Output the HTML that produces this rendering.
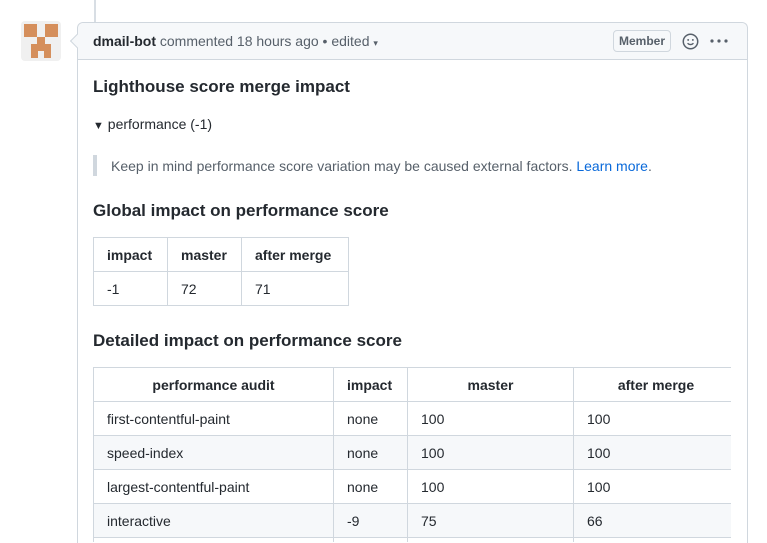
<!DOCTYPE html>
<html><head><meta charset="utf-8"><style>
*{box-sizing:border-box;margin:0;padding:0}
html,body{width:767px;height:543px;overflow:hidden}
body{background:#fff;font-family:"Liberation Sans",sans-serif;color:#24292f;position:relative}
.abs{position:absolute}
.line{left:94px;top:0;width:2px;height:22px;background:#d8dee4}
.av{left:21px;top:21px;width:40px;height:40px;background:#f0f0f0;border-radius:4px}
.sq{position:absolute;background:#d58f5c}
.box{left:77px;top:22px;width:671px;height:521px;border:1px solid #d0d7de;border-bottom:none;border-radius:6px 6px 0 0}
.hdr{left:78px;top:23px;width:669px;height:37px;background:#f6f8fa;border-bottom:1px solid #d0d7de;border-radius:6px 6px 0 0;font-size:14px;color:#57606a;line-height:37px;padding-left:15px}
.hdr b{color:#24292f}
h3{position:absolute;font-size:17px;font-weight:bold;color:#24292f}
table{border-collapse:collapse;font-size:14px;position:absolute}
td,th{border:1px solid #d0d7de;height:34px;padding:0 13px;text-align:left}
th{font-weight:bold}
tr.s td{background:#f6f8fa}
tr.t td{height:4px;border-bottom:none}
</style></head><body>
<div class="abs line"></div>
<div class="abs av">
<div class="sq" style="left:3px;top:3px;width:13px;height:13px"></div>
<div class="sq" style="left:24px;top:3px;width:13px;height:13px"></div>
<div class="sq" style="left:16px;top:16px;width:8px;height:7px"></div>
<div class="sq" style="left:10px;top:23px;width:20px;height:7px"></div>
<div class="sq" style="left:10px;top:29px;width:7px;height:8px"></div>
<div class="sq" style="left:23px;top:29px;width:7px;height:8px"></div>
</div>
<div class="abs box"></div>
<div class="abs" style="left:72px;top:36px;width:10px;height:10px;background:#f6f8fa;border-left:1px solid #d0d7de;border-bottom:1px solid #d0d7de;transform:rotate(45deg)"></div>
<div class="abs hdr"><b>dmail-bot</b> commented 18 hours ago • edited <span style="font-size:9px">▾</span></div>
<div class="abs" style="left:613px;top:30px;width:58px;height:22px;border:1px solid #d0d7de;border-radius:4px;font-size:12px;font-weight:bold;color:#57606a;line-height:20px;text-align:center">Member</div>
<svg class="abs" style="left:682px;top:33px" width="17" height="17" viewBox="0 0 16 16"><circle cx="8" cy="8" r="6.8" fill="none" stroke="#57606a" stroke-width="1.4"/><circle cx="5.8" cy="6.5" r="0.9" fill="#57606a"/><circle cx="10.2" cy="6.5" r="0.9" fill="#57606a"/><path d="M5.2 9.6q2.8 2.6 5.6 0" fill="none" stroke="#57606a" stroke-width="1.3"/></svg>
<svg class="abs" style="left:710px;top:39px" width="18" height="4"><circle cx="2" cy="2" r="1.6" fill="#57606a"/><circle cx="9" cy="2" r="1.6" fill="#57606a"/><circle cx="16" cy="2" r="1.6" fill="#57606a"/></svg>
<h3 style="left:93px;top:77px">Lighthouse score merge impact</h3>
<div class="abs" style="left:93px;top:116px;font-size:14px"><span style="font-size:11px">▼</span> performance (-1)</div>
<div class="abs" style="left:93px;top:155px;width:4px;height:21px;background:#d0d7de"></div>
<div class="abs" style="left:111px;top:158px;font-size:14px;color:#57606a">Keep in mind performance score variation may be caused external factors. <span style="color:#0969da">Learn more</span>.</div>
<h3 style="left:93px;top:201px">Global impact on performance score</h3>
<table style="left:93px;top:237px">
<tr><th style="width:74px">impact</th><th style="width:74px">master</th><th style="width:107px">after merge</th></tr>
<tr><td>-1</td><td>72</td><td>71</td></tr>
</table>
<h3 style="left:93px;top:331px">Detailed impact on performance score</h3>
<div class="abs" style="left:93px;top:367px;width:638px;height:176px;overflow:hidden">
<table style="left:0;top:0;width:646px">
<tr><th style="width:240px;text-align:center">performance audit</th><th style="width:74px">impact</th><th style="width:166px;text-align:center">master</th><th style="text-align:center">after merge</th></tr>
<tr><td>first-contentful-paint</td><td>none</td><td>100</td><td>100</td></tr>
<tr class="s"><td>speed-index</td><td>none</td><td>100</td><td>100</td></tr>
<tr><td>largest-contentful-paint</td><td>none</td><td>100</td><td>100</td></tr>
<tr class="s"><td>interactive</td><td>-9</td><td>75</td><td>66</td></tr>
<tr class="t"><td></td><td></td><td></td><td></td></tr>
</table></div>
</body></html>
